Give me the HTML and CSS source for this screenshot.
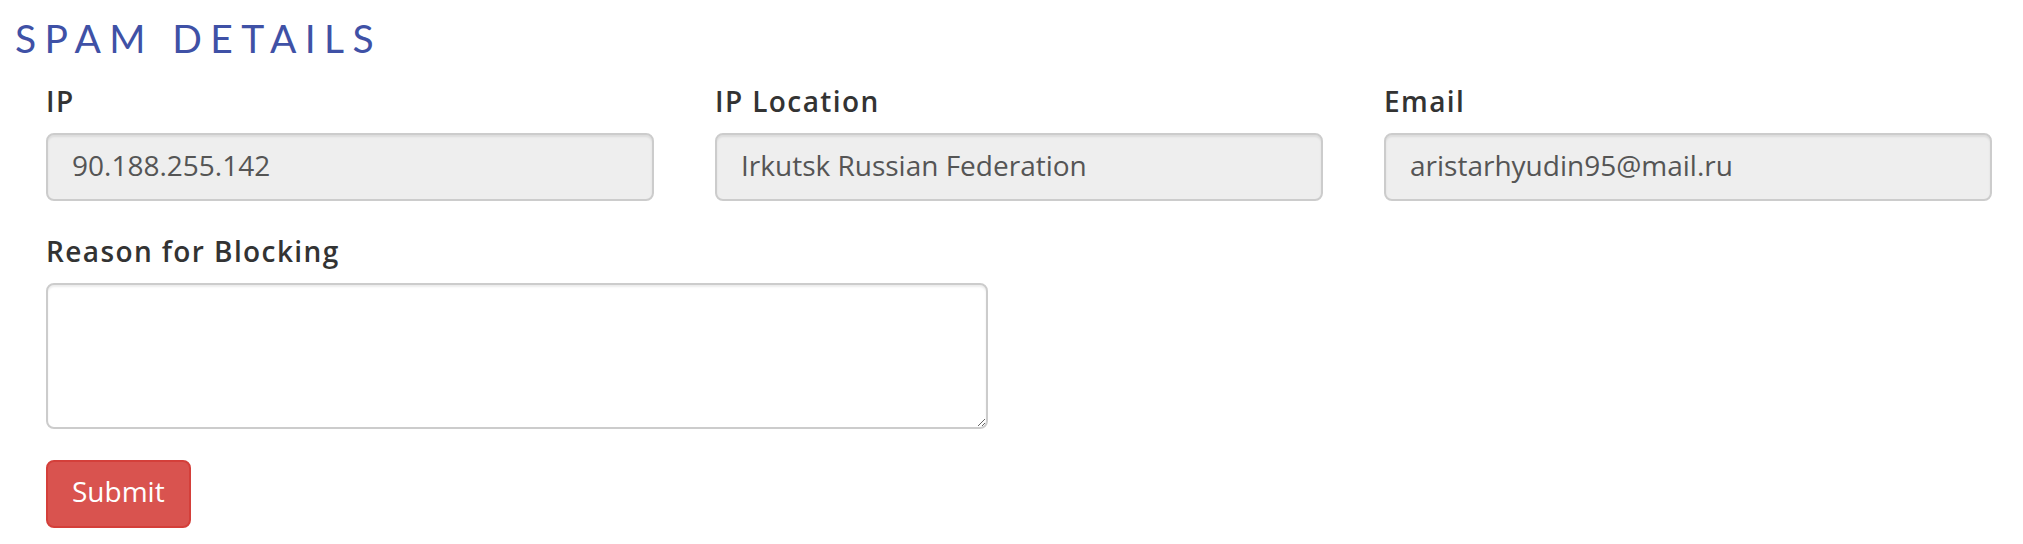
FILE: index.html
```html
<!DOCTYPE html>
<html lang="en">
<head>
<meta charset="utf-8">
<title>Spam Details</title>
<link rel="stylesheet" href="styles.css">
</head>
<body>
<main class="page">
  <h1 class="title">SPAM DETAILS</h1>
  <form class="form">
    <div class="row">
      <div class="group">
        <label class="label" for="ip">IP</label>
        <input class="field" id="ip" type="text" value="90.188.255.142" readonly>
      </div>
      <div class="group">
        <label class="label" for="loc">IP Location</label>
        <input class="field" id="loc" type="text" value="Irkutsk Russian Federation" readonly>
      </div>
      <div class="group">
        <label class="label" for="email">Email</label>
        <input class="field" id="email" type="text" value="aristarhyudin95@mail.ru" readonly>
      </div>
    </div>
    <div class="group group-reason">
      <label class="label" for="reason">Reason for Blocking</label>
      <textarea class="area" id="reason"></textarea>
    </div>
    <button class="btn" type="button">Submit</button>
  </form>
</main>
</body>
</html>
```

FILE: styles.css
```css
html, body {
  margin: 0;
  padding: 0;
  background: #ffffff;
}

.page {
  font-family: "Open Sans", "Liberation Sans", sans-serif;
  font-size: 28px;
  color: #333333;
}

.title {
  margin: 15px 0 20px 15px;
  font-family: "Lato", "Open Sans", sans-serif;
  font-weight: 400;
  font-size: 39px;
  line-height: 46px;
  letter-spacing: 8.4px;
  color: #3f51a6;
}

.form {
  padding-left: 46px;
  padding-right: 31px;
}

.row {
  display: grid;
  grid-template-columns: repeat(3, 1fr);
  column-gap: 61px;
}

.group {
  display: flex;
  flex-direction: column;
  margin-bottom: 30px;
}

.group-reason {
  width: 942px;
  margin-bottom: 31px;
}

.label {
  display: block;
  font-weight: 600;
  line-height: 40px;
  letter-spacing: 1.4px;
  margin-bottom: 12px;
  color: #333333;
}

.field {
  box-sizing: border-box;
  width: 100%;
  height: 68px;
  margin: 0;
  padding: 10px 24px 14px;
  font-family: inherit;
  font-size: 28px;
  line-height: 40px;
  color: #555555;
  background: #eeeeee;
  border: 2px solid #cccccc;
  border-radius: 8px;
  box-shadow: inset 0 2px 2px rgba(0, 0, 0, 0.075);
  outline: none;
}

.area {
  box-sizing: border-box;
  width: 942px;
  height: 146px;
  margin: 0;
  padding: 12px 24px;
  font-family: inherit;
  font-size: 28px;
  line-height: 40px;
  color: #555555;
  background: #ffffff;
  border: 2px solid #cccccc;
  border-radius: 8px;
  box-shadow: inset 0 2px 2px rgba(0, 0, 0, 0.075);
  outline: none;
  resize: vertical;
}

.btn {
  box-sizing: border-box;
  height: 68px;
  margin: 0;
  padding: 9px 24px 15px;
  font-family: inherit;
  font-size: 28px;
  line-height: 40px;
  color: #ffffff;
  background: #d9534f;
  border: 2px solid #d43f3a;
  border-radius: 8px;
  cursor: pointer;
}
```
